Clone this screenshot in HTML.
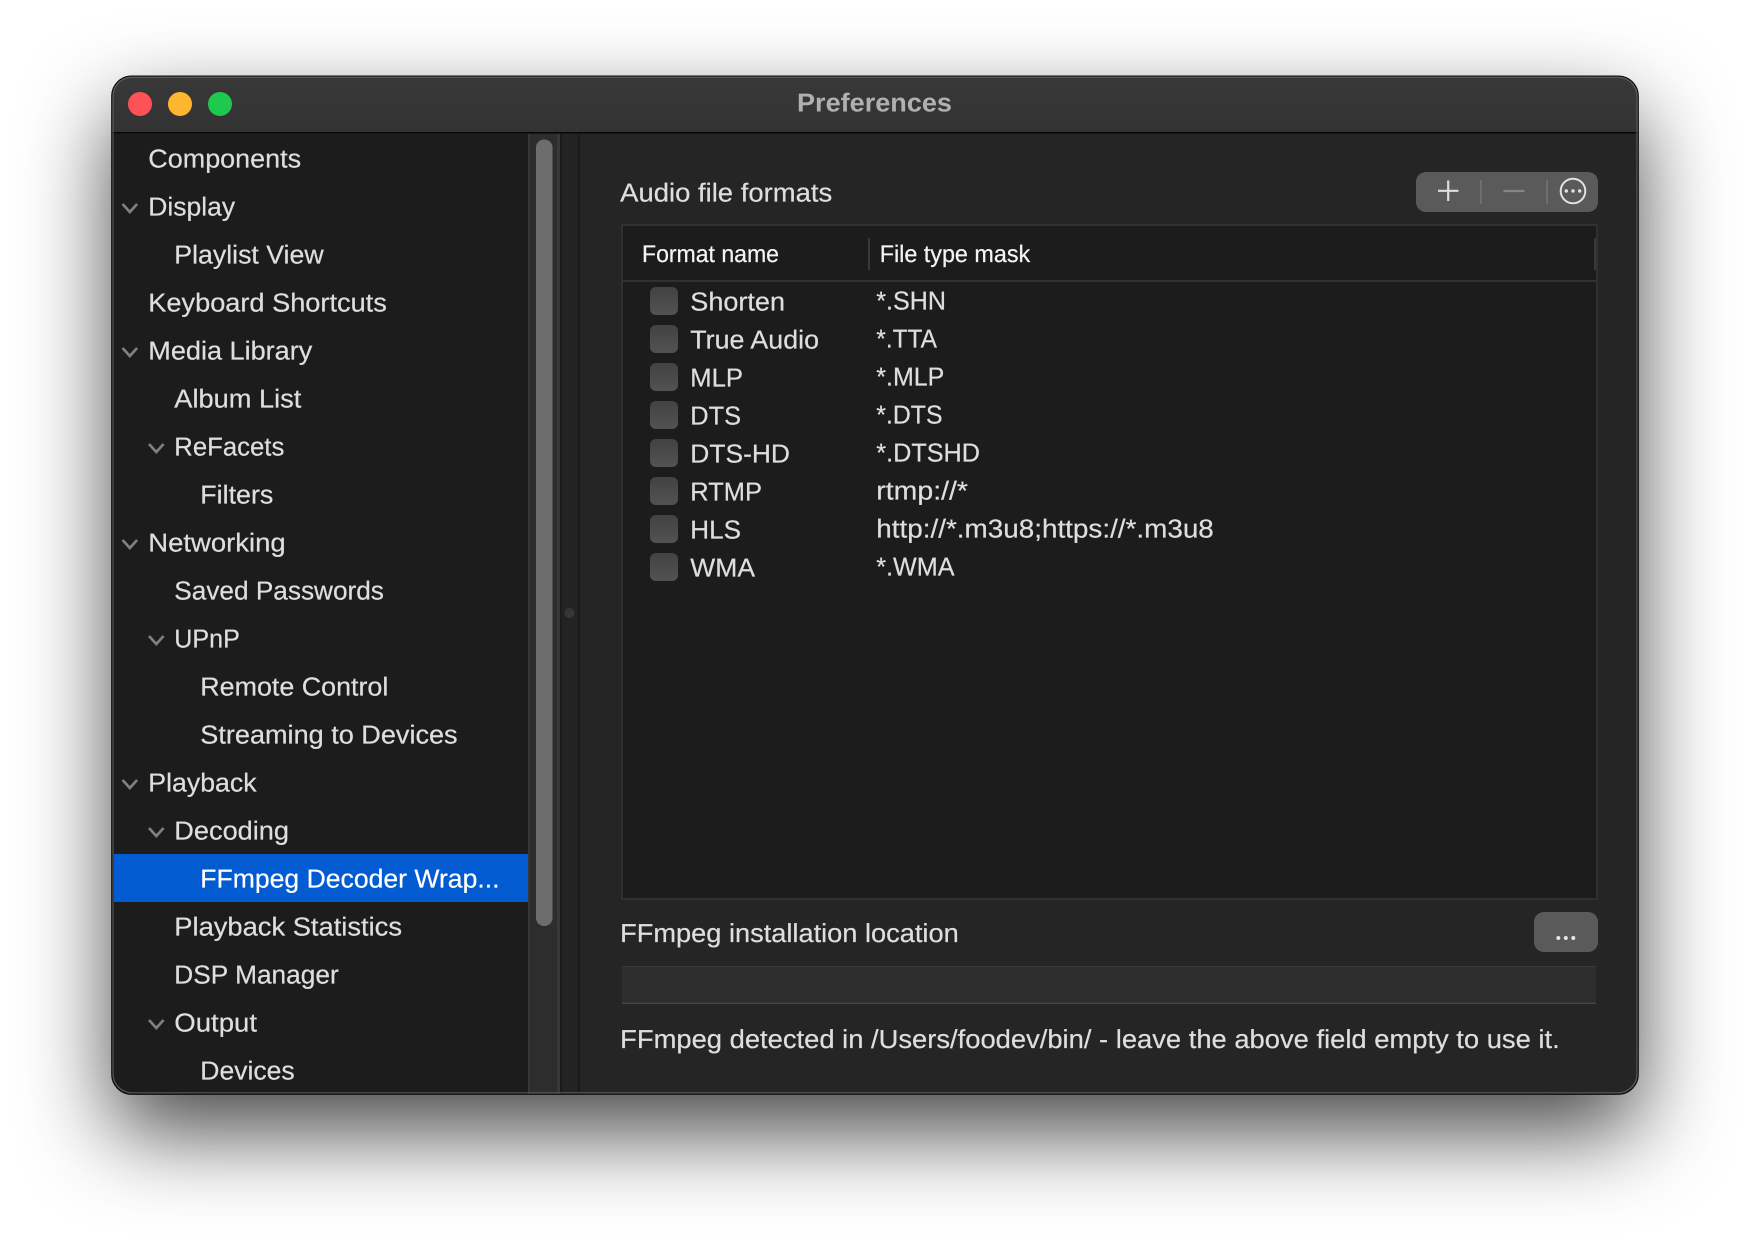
<!DOCTYPE html>
<html><head><meta charset="utf-8"><title>Preferences</title>
<style>
html,body{margin:0;padding:0;background:#fff;width:1750px;height:1242px;overflow:hidden}
#sh{position:absolute;left:112px;top:76px;width:1526px;height:1018px;border-radius:20px;box-shadow:0 38px 88px rgba(0,0,0,.72)}
svg{position:absolute;left:0;top:0}
text{font-family:"Liberation Sans",sans-serif;font-size:26px;fill:#dedede;stroke:#dedede;stroke-width:.22px;text-rendering:geometricPrecision}
.c{fill:none;stroke:#808080;stroke-width:2.7}
</style></head><body>
<div id="sh"></div>
<svg width="1750" height="1242" viewBox="0 0 1750 1242" xmlns="http://www.w3.org/2000/svg">
<defs>
<clipPath id="w"><rect x="112" y="76" width="1526" height="1018" rx="20"/></clipPath>
<linearGradient id="cb" x1="0" y1="0" x2="0" y2="1"><stop offset="0" stop-color="#424242"/><stop offset="1" stop-color="#525252"/></linearGradient>
<linearGradient id="tb" x1="0" y1="0" x2="0" y2="1"><stop offset="0" stop-color="#383838"/><stop offset="1" stop-color="#333"/></linearGradient>
</defs>
<g clip-path="url(#w)">
<rect x="112" y="76" width="1526" height="1018" fill="#252525"/>
<rect x="112" y="76" width="1526" height="56" fill="url(#tb)"/>
<rect x="112" y="132" width="1526" height="1.5" fill="#080808"/>
<rect x="112" y="134" width="416" height="960" fill="#1c1c1c"/>
<rect x="528" y="134" width="32" height="960" fill="#2d2d2d"/>
<rect x="528" y="134" width="1.5" height="960" fill="#3a3a3a"/>
<rect x="557" y="134" width="3" height="960" fill="#383838"/>
<rect x="560" y="134" width="20" height="960" fill="#232323"/>
<rect x="560" y="134" width="2" height="960" fill="#1b1b1b"/>
<rect x="578" y="134" width="2" height="960" fill="#1b1b1b"/>
<circle cx="569.5" cy="613" r="5" fill="#363636"/>
<rect x="536" y="139.5" width="16.5" height="786.5" rx="8" fill="#6d6d6d"/>
<rect x="114" y="854" width="414" height="48" fill="#025bd0"/>
</g>
<rect x="113" y="77.3" width="1524" height="1015.5" rx="19" fill="none" stroke="#666" stroke-opacity=".8" stroke-width="1.2"/>
<rect x="111.7" y="76" width="1526.6" height="1018.3" rx="20" fill="none" stroke="#0c0c0c" stroke-width="1.1"/>

<circle cx="140" cy="104" r="12" fill="#ff5257"/>
<circle cx="180" cy="104" r="12" fill="#feb62f"/>
<circle cx="220" cy="104" r="12" fill="#1fc94e"/>
<text x="797" y="111.7" textLength="155" lengthAdjust="spacingAndGlyphs" font-weight="700" style="fill:#b0b0b0;stroke:none">Preferences</text>

<text x="148.3" y="167.5" textLength="152.8" lengthAdjust="spacingAndGlyphs">Components</text>
<text x="148.3" y="215.5" textLength="86.8" lengthAdjust="spacingAndGlyphs">Display</text>
<text x="174.3" y="263.5" textLength="149.3" lengthAdjust="spacingAndGlyphs">Playlist View</text>
<text x="148.3" y="311.5" textLength="238.5" lengthAdjust="spacingAndGlyphs">Keyboard Shortcuts</text>
<text x="148.3" y="359.5" textLength="164" lengthAdjust="spacingAndGlyphs">Media Library</text>
<text x="174.3" y="407.5" textLength="127" lengthAdjust="spacingAndGlyphs">Album List</text>
<text x="174.3" y="455.5" textLength="110" lengthAdjust="spacingAndGlyphs">ReFacets</text>
<text x="200.3" y="503.5" textLength="73" lengthAdjust="spacingAndGlyphs">Filters</text>
<text x="148.3" y="551.5" textLength="137.4" lengthAdjust="spacingAndGlyphs">Networking</text>
<text x="174.3" y="599.5" textLength="209.6" lengthAdjust="spacingAndGlyphs">Saved Passwords</text>
<text x="174.3" y="647.5" textLength="65.5" lengthAdjust="spacingAndGlyphs">UPnP</text>
<text x="200.3" y="695.5" textLength="188" lengthAdjust="spacingAndGlyphs">Remote Control</text>
<text x="200.3" y="743.5" textLength="257.3" lengthAdjust="spacingAndGlyphs">Streaming to Devices</text>
<text x="148.3" y="791.5" textLength="108.3" lengthAdjust="spacingAndGlyphs">Playback</text>
<text x="174.3" y="839.5" textLength="114.7" lengthAdjust="spacingAndGlyphs">Decoding</text>
<text x="200.3" y="887.5" textLength="299.2" lengthAdjust="spacingAndGlyphs" style="fill:#fff;stroke:#fff">FFmpeg Decoder Wrap...</text>
<text x="174.3" y="935.5" textLength="227.7" lengthAdjust="spacingAndGlyphs">Playback Statistics</text>
<text x="174.3" y="983.5" textLength="164.4" lengthAdjust="spacingAndGlyphs">DSP Manager</text>
<text x="174.3" y="1031.5" textLength="82.7" lengthAdjust="spacingAndGlyphs">Output</text>
<text x="200.3" y="1079.5" textLength="94.4" lengthAdjust="spacingAndGlyphs">Devices</text>

<path class="c" d="M122.5 204l7.3 8 7.3-8"/>
<path class="c" d="M122.5 348l7.3 8 7.3-8"/>
<path class="c" d="M122.5 540l7.3 8 7.3-8"/>
<path class="c" d="M122.5 780l7.3 8 7.3-8"/>
<path class="c" d="M149 444l7.3 8 7.3-8"/>
<path class="c" d="M149 636l7.3 8 7.3-8"/>
<path class="c" d="M149 828l7.3 8 7.3-8"/>
<path class="c" d="M149 1020l7.3 8 7.3-8"/>

<text x="620.2" y="201.5" textLength="212" lengthAdjust="spacingAndGlyphs">Audio file formats</text>
<rect x="1416" y="172" width="182" height="40" rx="10" fill="#5a5a5a"/>
<path d="M1438 190.8h20.5M1448.2 180.5v20.5" fill="none" stroke="#dedede" stroke-width="2.2"/>
<rect x="1480" y="180" width="2" height="24" fill="#6e6e6e"/>
<path d="M1503.5 191h21" fill="none" stroke="#858585" stroke-width="2.2"/>
<rect x="1546" y="180" width="2" height="24" fill="#6e6e6e"/>
<circle cx="1573" cy="191" r="12.3" fill="none" stroke="#e2e2e2" stroke-width="2"/>
<circle cx="1566.3" cy="191" r="1.7" fill="#e2e2e2"/><circle cx="1573" cy="191" r="1.7" fill="#e2e2e2"/><circle cx="1579.7" cy="191" r="1.7" fill="#e2e2e2"/>

<rect x="622" y="225" width="975" height="674" fill="#1c1c1c" stroke="#303030" stroke-width="2"/>
<rect x="622" y="280" width="975" height="2" fill="#303030"/>
<rect x="868" y="238" width="2" height="32" fill="#3a3a3a"/>
<rect x="1594" y="238" width="2" height="32" fill="#3a3a3a"/>
<text x="642" y="262" textLength="137" lengthAdjust="spacingAndGlyphs" style="font-size:24px;fill:#f4f4f4;stroke:#f4f4f4">Format name</text>
<text x="879.7" y="262" textLength="150.5" lengthAdjust="spacingAndGlyphs" style="font-size:24px;fill:#f4f4f4;stroke:#f4f4f4">File type mask</text>

<rect x="650" y="287" width="28" height="28" rx="6" fill="url(#cb)"/>
<rect x="650" y="325" width="28" height="28" rx="6" fill="url(#cb)"/>
<rect x="650" y="363" width="28" height="28" rx="6" fill="url(#cb)"/>
<rect x="650" y="401" width="28" height="28" rx="6" fill="url(#cb)"/>
<rect x="650" y="439" width="28" height="28" rx="6" fill="url(#cb)"/>
<rect x="650" y="477" width="28" height="28" rx="6" fill="url(#cb)"/>
<rect x="650" y="515" width="28" height="28" rx="6" fill="url(#cb)"/>
<rect x="650" y="553" width="28" height="28" rx="6" fill="url(#cb)"/>

<text x="690.3" y="310.4" textLength="94.7" lengthAdjust="spacingAndGlyphs">Shorten</text>
<text x="690.3" y="348.4" textLength="128.7" lengthAdjust="spacingAndGlyphs">True Audio</text>
<text x="690.3" y="386.4" textLength="52.7" lengthAdjust="spacingAndGlyphs">MLP</text>
<text x="690.3" y="424.4" textLength="50.7" lengthAdjust="spacingAndGlyphs">DTS</text>
<text x="690.3" y="462.4" textLength="99.7" lengthAdjust="spacingAndGlyphs">DTS-HD</text>
<text x="690.3" y="500.4" textLength="71.7" lengthAdjust="spacingAndGlyphs">RTMP</text>
<text x="690.3" y="538.4" textLength="50.7" lengthAdjust="spacingAndGlyphs">HLS</text>
<text x="690.3" y="576.4" textLength="64.7" lengthAdjust="spacingAndGlyphs">WMA</text>

<text x="876.3" y="309.4" textLength="69.7" lengthAdjust="spacingAndGlyphs">*.SHN</text>
<text x="876.3" y="347.4" textLength="60.7" lengthAdjust="spacingAndGlyphs">*.TTA</text>
<text x="876.3" y="385.4" textLength="68" lengthAdjust="spacingAndGlyphs">*.MLP</text>
<text x="876.3" y="423.4" textLength="66.2" lengthAdjust="spacingAndGlyphs">*.DTS</text>
<text x="876.3" y="461.4" textLength="103.7" lengthAdjust="spacingAndGlyphs">*.DTSHD</text>
<text x="876.3" y="499.4" textLength="91.7" lengthAdjust="spacingAndGlyphs">rtmp://*</text>
<text x="876.3" y="537.4" textLength="337.5" lengthAdjust="spacingAndGlyphs">http://*.m3u8;https://*.m3u8</text>
<text x="876.3" y="575.4" textLength="78.2" lengthAdjust="spacingAndGlyphs">*.WMA</text>

<text x="620.2" y="941.8" textLength="338.5" lengthAdjust="spacingAndGlyphs">FFmpeg installation location</text>
<rect x="1534" y="912" width="64" height="40" rx="10" fill="#5a5a5a"/>
<circle cx="1558.3" cy="938" r="2" fill="#e6e6e6"/><circle cx="1565.8" cy="938" r="2" fill="#e6e6e6"/><circle cx="1573.3" cy="938" r="2" fill="#e6e6e6"/>
<rect x="622" y="966" width="974" height="38" fill="#2e2e2e"/>
<rect x="622" y="966" width="974" height="1" fill="#393939"/>
<rect x="622" y="1002.7" width="974" height="1.3" fill="#464646"/>
<text x="620.2" y="1047.8" textLength="939.5" lengthAdjust="spacingAndGlyphs">FFmpeg detected in /Users/foodev/bin/ - leave the above field empty to use it.</text>
</svg>
</body></html>
